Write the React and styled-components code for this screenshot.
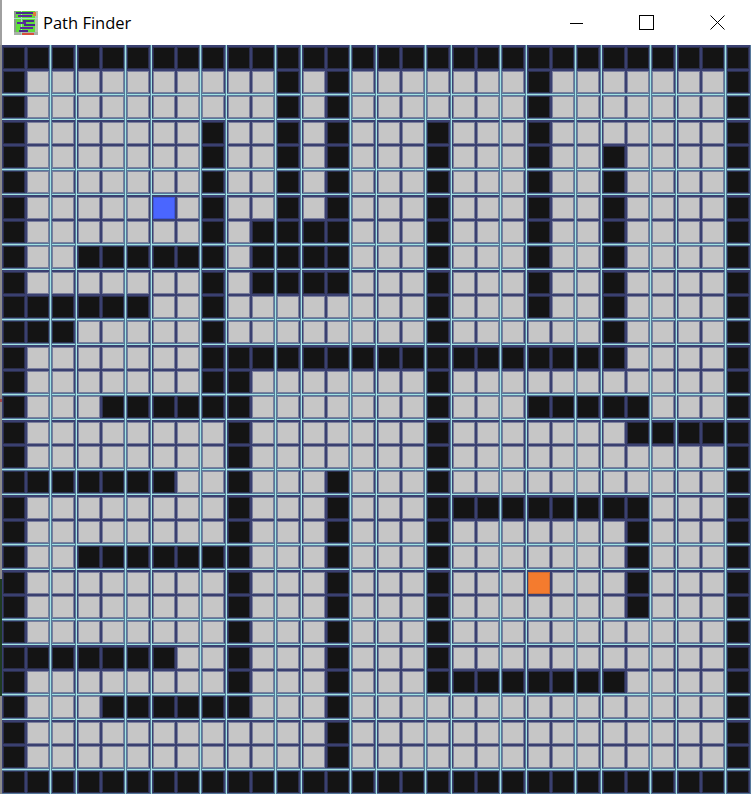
import styled, { createGlobalStyle, css } from "styled-components";

// # wall, . free, S start, E end
const MAP = [
  "##############################",
  "#..........#.#.......#.......#",
  "#..........#.#.......#.......#",
  "#.......#..#.#...#...#.......#",
  "#.......#..#.#...#...#..#....#",
  "#.......#..#.#...#...#..#....#",
  "#.....S.#..#.#...#...#..#....#",
  "#.......#.####...#...#..#....#",
  "#..######.####...#...#..#....#",
  "#.......#.####...#...#..#....#",
  "######..#........#...#..#....#",
  "###.....#........#......#....#",
  "#.......#################....#",
  "#.......##.......#...........#",
  "#...######.......#...#####...#",
  "#........#.......#.......#####",
  "#........#.......#...........#",
  "#######..#...#...#...........#",
  "#........#...#...#########...#",
  "#........#...#...#.......#...#",
  "#..#######...#...#.......#...#",
  "#........#...#...#...E...#...#",
  "#........#...#...#.......#...#",
  "#........#...#...#...........#",
  "#######..#...#...#...........#",
  "#........#...#...########....#",
  "#...######...#...............#",
  "#............#...............#",
  "#............#...............#",
  "##############################",
];

const GlobalStyle = createGlobalStyle`
  html, body {
    margin: 0;
    padding: 0;
    background: #fff;
    overflow: hidden;
  }
`;

const Window = styled.div`
  width: 751px;
  height: 794px;
  display: flex;
  flex-direction: column;
  overflow: hidden;
`;

const TitleBar = styled.header`
  height: 45px;
  flex: none;
  display: flex;
  align-items: center;
  padding: 0 26px 0 12px;
  box-sizing: border-box;
  background: #fff;
  border-left: 2px solid #a0a0a0;
`;

const Title = styled.span`
  margin-left: 5px;
  flex: 1;
  font-family: "Open Sans", "Liberation Sans", sans-serif;
  font-size: 16.5px;
  color: #000;
`;

const Controls = styled.div`
  display: flex;
  gap: 56px;
`;

const Body = styled.main`
  flex: 1;
  display: flex;
  min-height: 0;
`;

const Edge = styled.div`
  width: 2px;
  flex: none;
  background: linear-gradient(
    to bottom,
    #8c8c8c 0 354px,
    #a04848 354px 357px,
    #8c8c8c 357px 534px,
    #1f3a22 534px 651px,
    #8c8c8c 651px
  );
`;

const Board = styled.div`
  flex: 1;
  display: grid;
  grid-template-columns: repeat(10, 24px 25px 26px);
  grid-template-rows: repeat(10, 24px 25px 26px);
  padding: 2px 0 0 1px;
  background-color: #3a4070;
  background-image:
    linear-gradient(
      to right,
      transparent 47px,
      #56789a 47px 48px,
      #a3e3e3 48px 49px,
      #56789a 49px 50px,
      transparent 50px 73px,
      #56789a 73px 74px,
      #a3e3e3 74px 75px
    ),
    linear-gradient(
      to bottom,
      transparent 48px,
      #56789a 48px 49px,
      #a3e3e3 49px 50px,
      #56789a 50px 51px,
      transparent 51px 73px,
      #56789a 73px 74px,
      #a3e3e3 74px 75px
    );
  background-size: 75px 100%, 100% 75px;
  background-repeat: repeat-x, repeat-y;
  overflow: hidden;
`;

const cellKinds = {
  "#": css`
    background: #141414;
    border-color: #2b2e4c;
  `,
  ".": css`
    background: #c6c6c6;
    border-color: #7a7e9c;
  `,
  S: css`
    background: #4a66ff;
    border-color: #3d55d8;
  `,
  E: css`
    background: #f47b2e;
    border-color: #c96a34;
  `,
};

const Cell = styled.div`
  width: 22px;
  height: 22px;
  box-sizing: border-box;
  border: 1px solid;
  ${({ $kind }) => cellKinds[$kind]}
`;

function AppIcon() {
  return (
    <svg width="24" height="24" viewBox="0 0 24 24" shapeRendering="crispEdges">
      <rect width="24" height="24" fill="#5fe03a" />
      <rect x="0" y="0" width="2" height="24" fill="#8a9a8a" />
      <rect x="21" y="0" width="3" height="24" fill="#b8c4b0" />
      <rect x="0" y="21" width="24" height="3" fill="#a8b0a8" />
      <rect x="8" y="22" width="12" height="2" fill="#d8503c" />
      <rect x="7" y="0" width="1" height="24" fill="#a8e0c0" />
      <rect x="0" y="7" width="24" height="1" fill="#a8e0c0" />
      <rect x="2" y="1" width="17" height="2" fill="#4a2a8c" />
      <rect x="4" y="4" width="14" height="2" fill="#5a2a9c" />
      <rect x="9" y="9" width="11" height="2" fill="#4a2a8c" />
      <rect x="3" y="11" width="9" height="2" fill="#5a2a9c" />
      <rect x="10" y="13" width="11" height="2" fill="#4a2a8c" />
      <rect x="6" y="16" width="13" height="2" fill="#5a2a9c" />
      <rect x="5" y="19" width="9" height="2" fill="#4a2a8c" />
      <rect x="19" y="1" width="3" height="4" fill="#e07a3c" />
    </svg>
  );
}

function Minimize() {
  return (
    <svg width="15" height="15" viewBox="0 0 15 15" shapeRendering="crispEdges">
      <path d="M2 8h13" stroke="#000" fill="none" />
    </svg>
  );
}

function Maximize() {
  return (
    <svg width="15" height="15" viewBox="0 0 15 15" shapeRendering="crispEdges">
      <rect x="0.5" y="0.5" width="14" height="14" stroke="#000" fill="none" />
    </svg>
  );
}

function Close() {
  return (
    <svg width="15" height="15" viewBox="0 0 15 15">
      <path d="M0.5 0.5l14 14M14.5 0.5l-14 14" stroke="#000" fill="none" />
    </svg>
  );
}

export default function App() {
  return (
    <Window>
      <GlobalStyle />
      <TitleBar>
        <AppIcon />
        <Title>Path Finder</Title>
        <Controls>
          <Minimize />
          <Maximize />
          <Close />
        </Controls>
      </TitleBar>
      <Body>
        <Edge />
        <Board>
          {MAP.flatMap((row, y) =>
            row.split("").map((kind, x) => <Cell key={`${x}-${y}`} $kind={kind} />)
          )}
        </Board>
      </Body>
    </Window>
  );
}
